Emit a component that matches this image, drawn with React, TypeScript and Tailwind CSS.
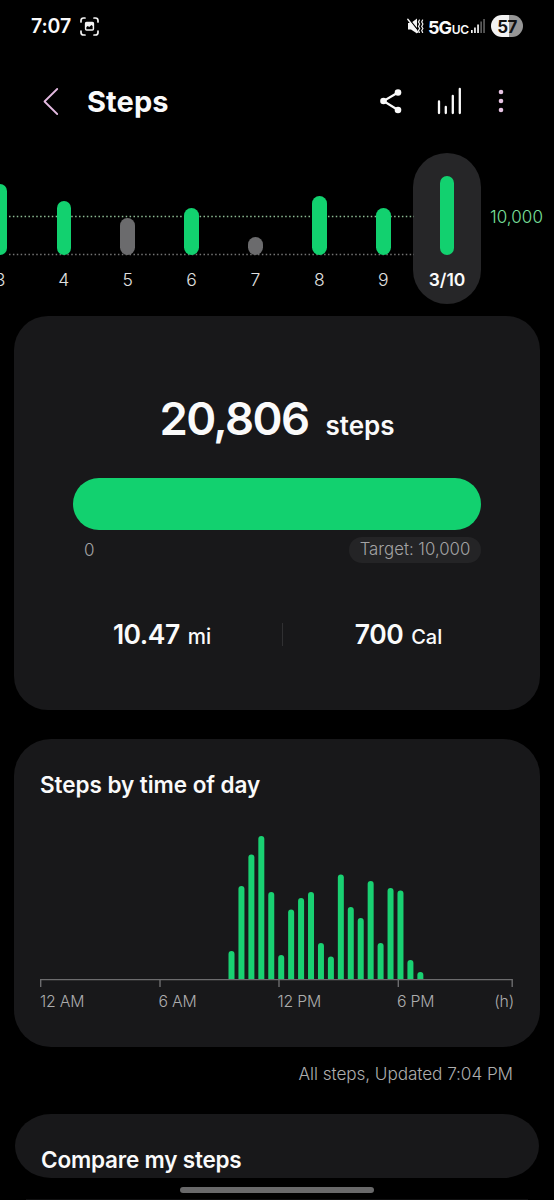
import React from "react";

const week = [
  { label: "3", h: 70.5, met: true },
  { label: "4", h: 53.5, met: true },
  { label: "5", h: 36.5, met: false },
  { label: "6", h: 46.5, met: true },
  { label: "7", h: 17.5, met: false },
  { label: "8", h: 58.5, met: true },
  { label: "9", h: 46.5, met: true },
];

const halfHours = [
  28.5, 93.5, 125, 143.5, 87.5, 24.5, 70, 81.5, 87.5, 36.5, 23, 105, 72.5, 61.5, 98.5, 36.5, 91.5, 89, 19.5, 7.5,
];

function StatusBar() {
  return (
    <div className="flex h-[52px] items-center pl-[31px] pr-[31px]">
      <span className="w-[41px] whitespace-nowrap pt-[2px] text-[19.5px] font-semibold tracking-[-0.1px]">7:07</span>
      <svg className="ml-[8px]" width="19" height="19" viewBox="0 0 19 19" fill="none" stroke="#f4f4f4" strokeWidth="1.7" strokeLinecap="round">
        <path d="M1 5V3.6Q1 1 3.6 1H5M14 1h1.4Q18 1 18 3.6V5M18 14v1.4q0 2.6-2.6 2.6H14M5 18H3.6Q1 18 1 15.400V14" />
        <rect x="5.6" y="5.600" width="7.800" height="7.400" rx="1" strokeWidth="1.5" />
        <path d="M5.500 5.500h8v4l-2.100-1.500-2.200 2-1.400-1-2.300 1.500z" fill="#f4f4f4" stroke="none" />
      </svg>
      <div className="ml-auto flex items-center">
        <svg width="17" height="17" viewBox="0 0 17 17" fill="none" stroke="#f4f4f4" strokeWidth="1.200" strokeLinecap="round">
          <path d="M1 5h3l6-4.500v15L4 11.500H1z" fill="#f4f4f4" stroke="none" />
          <path d="M1.500 0.500 12.500 14" stroke="#000" strokeWidth="1.200" />
          <path d="M0.800 1.300 10.800 14.300" strokeWidth="1.400" />
          <path d="M12.400 2l-0.900 2 1.200 2-1.200 2.500 1.200 2-1.200 2 0.900 2M15.600 2l-0.900 2 1.200 2-1.200 2.500 1.200 2-1.200 2 0.900 2" />
        </svg>
        <div className="ml-[4px] flex w-[41px] items-baseline whitespace-nowrap pt-[2px] font-bold">
          <span className="text-[18px] tracking-[-1.100px]">5G</span>
          <span className="ml-[1px] text-[12px] font-semibold tracking-[-0.500px]">UC</span>
        </div>
        <svg className="ml-[2px]" width="15" height="16" viewBox="0 0 15 16">
          <rect x="0" y="12" width="1.700" height="3" fill="#f4f4f4" />
          <rect x="3.100" y="9.500" width="1.700" height="5.500" fill="#f4f4f4" />
          <rect x="6.200" y="6.500" width="1.700" height="8.500" fill="#f4f4f4" />
          <rect x="9.300" y="3.500" width="1.700" height="11.500" fill="#5c5c5c" />
          <rect x="12.200" y="1" width="1.700" height="14" fill="#5c5c5c" />
        </svg>
        <div className="ml-[5px] flex h-[22px] w-[32px] items-center justify-center rounded-full bg-[linear-gradient(90deg,#f2f2f2_57%,#969696_57%)] pt-px text-[17px] font-bold leading-[22px] tracking-[-0.700px] text-[#111]">
          57
        </div>
      </div>
    </div>
  );
}

function Header() {
  return (
    <div className="flex h-[101px] items-center pb-[3px] pl-[42px] pr-[50px]">
      <svg width="18" height="30" viewBox="0 0 18 30" fill="none" stroke="#e3b9e0" strokeWidth="1.800" strokeLinecap="round" strokeLinejoin="round">
        <path d="M15.200 3 2.500 15.500 15.200 28" />
      </svg>
      <h1 className="ml-[27px] whitespace-nowrap pt-[2px] text-[29px] font-bold tracking-[0.100px]">Steps</h1>
      <svg className="ml-auto" width="24" height="26" viewBox="0 0 24 26" fill="#fafafa">
        <path d="M19 4.500 4.500 13 19 22" fill="none" stroke="#fafafa" strokeWidth="2.200" />
        <circle cx="19" cy="4.500" r="3.300" />
        <circle cx="4.500" cy="13" r="3.300" />
        <circle cx="19" cy="22" r="3.300" />
      </svg>
      <svg className="ml-[34px]" width="26" height="28" viewBox="0 0 26 28" stroke="#fafafa" strokeWidth="2.300" strokeLinecap="round">
        <path d="M2 14.500V26M8.800 20v6M15.800 9v17M22.800 2v24" />
      </svg>
      <svg className="ml-[35px]" width="6" height="26" viewBox="0 0 6 26" fill="#e6c3e3">
        <circle cx="3" cy="4" r="2.300" />
        <circle cx="3" cy="13" r="2.300" />
        <circle cx="3" cy="22" r="2.300" />
      </svg>
    </div>
  );
}

function WeekChart() {
  return (
    <div className="relative flex h-[151px] overflow-hidden">
      <svg className="absolute left-0 top-0" width="414" height="151" fill="none" strokeWidth="1.300">
        <path d="M9 63.500H414" stroke="#8dbb93" strokeDasharray="1.500 2.390" />
        <path d="M9 101.500H414" stroke="#747474" strokeDasharray="1.500 2.390" />
      </svg>
      <div className="relative -ml-8 flex w-[445px] shrink-0">
        {week.map((d) => (
          <div key={d.label} className="flex w-[63.900px] shrink-0 flex-col items-center">
            <div className="flex h-[101.500px] items-end">
              <div className={d.met ? "w-[14.500px] rounded-full bg-[#12d16f]" : "w-[14.500px] rounded-full bg-[#6b6b6d]"} style={{ height: d.h }} />
            </div>
            <span className="mt-[13.500px] text-[17.500px] font-light leading-6 text-[#e0e0e0]">{d.label}</span>
          </div>
        ))}
      </div>
      <div className="flex w-[68px] shrink-0 flex-col items-center rounded-full bg-[#262628]">
        <div className="flex h-[101.500px] items-end">
          <div className="h-[78.500px] w-[14.500px] rounded-full bg-[#12d16f]" />
        </div>
        <span className="mt-[13px] whitespace-nowrap text-[17.500px] font-semibold leading-6">3/10</span>
      </div>
      <span className="ml-[9px] mt-[52px] whitespace-nowrap text-[17px] font-light leading-6 tracking-[0.050px] text-[#7be09d]">10,000</span>
    </div>
  );
}

function Summary() {
  return (
    <section className="mx-[14px] mt-[12px] h-[394px] rounded-[34px] bg-[#18181a] px-[59px] pt-[71px]">
      <div className="flex h-[64px] items-baseline justify-center whitespace-nowrap font-semibold">
        <span className="text-[45.500px] leading-[64px] tracking-[-1.600px]">20,806</span>
        <span className="ml-[17px] text-[26px]">steps</span>
      </div>
      <div className="mt-[27px] h-[52px] rounded-full bg-[#12d16f]" />
      <div className="mt-[7px] flex h-[26px] items-center justify-between text-[17px] font-light text-[#a3a3a4]">
        <span className="pl-[11px] pt-px">0</span>
        <span className="flex h-[26px] w-[132px] items-center justify-center whitespace-nowrap rounded-full bg-[#242426] text-[16.800px]">
          Target: 10,000
        </span>
      </div>
      <div className="mt-[54px] flex h-[34px] items-center">
        <div className="flex w-[209px] items-baseline justify-center gap-[8px] whitespace-nowrap pr-[31px] pt-px">
          <span className="text-[26.500px] font-semibold tracking-[-0.500px]">10.47</span>
          <span className="text-[20.500px] font-medium">mi</span>
        </div>
        <div className="h-[23px] w-px bg-[#303032]" />
        <div className="flex flex-1 items-baseline justify-center gap-[8px] whitespace-nowrap pl-[33px] pt-px">
          <span className="text-[26.500px] font-semibold tracking-[-0.500px]">700</span>
          <span className="text-[20px] font-medium">Cal</span>
        </div>
      </div>
    </section>
  );
}

function TimeOfDay() {
  return (
    <section className="mx-[14px] mt-[29px] h-[308px] rounded-[37px] bg-[#18181a] px-[26px] pt-[30px]">
      <h2 className="whitespace-nowrap text-[22.500px] font-semibold leading-8 tracking-[-0.050px]">Steps by time of day</h2>
      <svg className="mt-[29px]" width="474" height="158" viewBox="40 830 474 158">
        {halfHours.map((h, i) => {
          const x = 228.5 + i * 9.94;
          const y = 979.5 - h;
          return <path key={i} d={`M${x} 979.500V${y + 3}a3 3 0 0 1 6 0V979.500Z`} fill="#19d172" />;
        })}
        <path d="M40.700 987V979.600H512.200V987M160 979.600V987M279 979.600V987M398.300 979.600V987" fill="none" stroke="#6c6c6e" strokeWidth="1.400" />
      </svg>
      <div className="mt-[2px] flex whitespace-nowrap text-[15.800px] font-light leading-6 tracking-[-0.200px] text-[#acacad]">
        <span className="w-[118.500px]">12 AM</span>
        <span className="w-[119px]">6 AM</span>
        <span className="w-[119.500px]">12 PM</span>
        <span>6 PM</span>
        <span className="ml-auto">(h)</span>
      </div>
    </section>
  );
}

export default function App() {
  return (
    <main className="flex h-[1200px] w-[554px] flex-col overflow-hidden bg-black font-['Inter',sans-serif] text-[#fafafa]">
      <StatusBar />
      <Header />
      <WeekChart />
      <Summary />
      <TimeOfDay />
      <p className="mr-[41px] mt-[15px] whitespace-nowrap text-right text-[17.200px] font-light leading-6 tracking-[-0.080px] text-[#adadad]">All steps, Updated 7:04 PM</p>
      <section className="mx-[15px] mt-[28px] flex h-[64px] shrink-0 rounded-[36px/32px] bg-[#18181a] pl-[26px] pt-[30px]">
        <h2 className="whitespace-nowrap text-[22.500px] font-semibold leading-8 tracking-[-0.200px]">Compare my steps</h2>
      </section>
      <div className="mx-auto mt-[9px] h-[6px] w-[194px] shrink-0 rounded-full bg-[#69696a]" />
      <div className="mx-[26px] mt-[6px] h-px shrink-0 bg-[#111112]" />
    </main>
  );
}
